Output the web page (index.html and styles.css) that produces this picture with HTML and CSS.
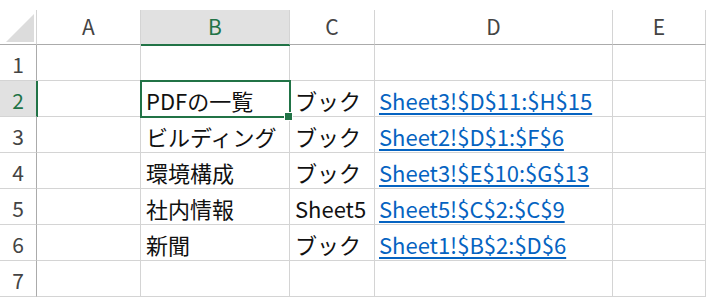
FILE: index.html
```html
<!DOCTYPE html>
<html>
<head>
    <meta charset="UTF-8">
    <title>Sheet</title>
    <link rel="stylesheet" href="styles.css">
</head>
<body>

<div class="sheet">
    <div class="corner">
        <svg width="28" height="28" viewBox="0 0 28 28"><polygon points="28,0 28,28 0,28" fill="#dcdcdc"/></svg>
    </div>
    <div class="col-hd">A</div>
    <div class="col-hd selected">B</div>
    <div class="col-hd">C</div>
    <div class="col-hd">D</div>
    <div class="col-hd">E</div>

    <div class="row-hd">1</div>
    <div class="cell"></div>
    <div class="cell"></div>
    <div class="cell"></div>
    <div class="cell"></div>
    <div class="cell"></div>

    <div class="row-hd selected">2</div>
    <div class="cell"></div>
    <div class="cell active">PDFの一覧<span class="sel-box"><span class="handle"></span></span></div>
    <div class="cell">ブック</div>
    <div class="cell link"><a href="#">Sheet3!$D$11:$H$15</a></div>
    <div class="cell"></div>

    <div class="row-hd">3</div>
    <div class="cell"></div>
    <div class="cell">ビルディング</div>
    <div class="cell">ブック</div>
    <div class="cell link"><a href="#">Sheet2!$D$1:$F$6</a></div>
    <div class="cell"></div>

    <div class="row-hd">4</div>
    <div class="cell"></div>
    <div class="cell">環境構成</div>
    <div class="cell">ブック</div>
    <div class="cell link"><a href="#">Sheet3!$E$10:$G$13</a></div>
    <div class="cell"></div>

    <div class="row-hd">5</div>
    <div class="cell"></div>
    <div class="cell">社内情報</div>
    <div class="cell">Sheet5</div>
    <div class="cell link"><a href="#">Sheet5!$C$2:$C$9</a></div>
    <div class="cell"></div>

    <div class="row-hd">6</div>
    <div class="cell"></div>
    <div class="cell">新聞</div>
    <div class="cell">ブック</div>
    <div class="cell link"><a href="#">Sheet1!$B$2:$D$6</a></div>
    <div class="cell"></div>

    <div class="row-hd">7</div>
    <div class="cell"></div>
    <div class="cell"></div>
    <div class="cell"></div>
    <div class="cell"></div>
    <div class="cell"></div>
</div>

</body>
</html>
```

FILE: styles.css
```css
body {
    margin: 0;
    padding: 0;
    background: #fff;
    font-family: "Noto Sans CJK JP", "Noto Sans", sans-serif;
    overflow: hidden;
}

.sheet {
    display: grid;
    grid-template-columns: 37px 104px 149px 85px 238px 1fr;
    grid-template-rows: 35px repeat(7, 36px);
    padding-top: 10px;
}

.sheet > div {
    box-sizing: border-box;
    border-right: 1px solid #d4d4d4;
    border-bottom: 1px solid #d4d4d4;
}

.corner {
    display: flex;
    justify-content: flex-end;
    align-items: flex-end;
    padding: 0 2px 2px 0;
    border-bottom-color: #ababab !important;
}

.col-hd {
    display: flex;
    align-items: center;
    justify-content: center;
    font-size: 21px;
    color: #444;
    padding-bottom: 2px;
    border-bottom-color: #ababab !important;
}

.col-hd.selected {
    position: relative;
    z-index: 1;
    background: #e1e1e1;
    color: #217346;
    border-bottom: 1px solid #217346 !important;
    box-shadow: 0 1px 0 #217346;
}

.row-hd {
    display: flex;
    align-items: center;
    justify-content: center;
    font-size: 21px;
    color: #444;
    padding-top: 2px;
    border-right-color: #ababab !important;
}

.row-hd.selected {
    position: relative;
    z-index: 1;
    background: #e1e1e1;
    color: #217346;
    border-right: 1px solid #217346 !important;
    box-shadow: 1px 0 0 #217346;
}

.cell {
    display: flex;
    align-items: center;
    padding: 2px 0 0 5px;
    font-size: 22px;
    color: #111;
    white-space: nowrap;
}

.cell.link {
    padding-left: 4px;
}

.cell a {
    color: #0563c1;
    text-decoration: underline;
    text-underline-offset: 3px;
}

.cell.active {
    position: relative;
}

.sel-box {
    position: absolute;
    left: -1px;
    top: -1px;
    width: 151px;
    height: 38px;
    box-sizing: border-box;
    border: 2px solid #217346;
}

.handle {
    position: absolute;
    left: 143px;
    top: 31px;
    width: 7px;
    height: 7px;
    background: #217346;
    box-shadow: 0 0 0 1px #fff;
}
```
